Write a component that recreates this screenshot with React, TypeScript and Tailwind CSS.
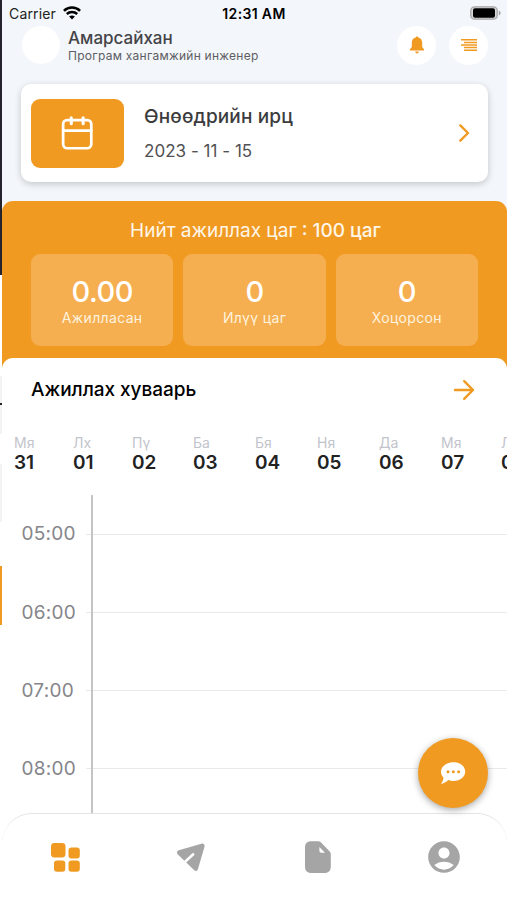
import { MdAccountCircle } from 'react-icons/md';

const stats = [
  { value: '0.00', label: 'Ажилласан' },
  { value: '0', label: 'Илүү цаг' },
  { value: '0', label: 'Хоцорсон' },
];

const days = [
  { name: 'Мя', date: '31', width: 'w-[59px]' },
  { name: 'Лх', date: '01', width: 'w-[59px]' },
  { name: 'Пү', date: '02', width: 'w-[61px]' },
  { name: 'Ба', date: '03', width: 'w-[62px]' },
  { name: 'Бя', date: '04', width: 'w-[62px]' },
  { name: 'Ня', date: '05', width: 'w-[62px]' },
  { name: 'Да', date: '06', width: 'w-[62px]' },
  { name: 'Мя', date: '07', width: 'w-[60px]' },
  { name: 'Лх', date: '08', width: 'w-[60px]' },
];

const hours = ['05:00', '06:00', '07:00', '08:00'];

function StatusBar() {
  return (
    <div className="flex h-[26px] shrink-0 items-center pl-[7px] pr-[6px] text-black">
      <div className="flex flex-1 items-center gap-[7px]">
        <span className="text-[14px] tracking-[0.15px] text-[#222]">Carrier</span>
        <svg width="18" height="14" viewBox="0 0 18 14" fill="none" stroke="#000" strokeWidth="2.5">
          <path d="M0.9 4.9C5.4 0.4 12.6 0.4 17.1 4.9" />
          <path d="M3.8 8C6.7 5.2 11.3 5.2 14.2 8" />
          <path d="M9 13.6L6.1 10.6C7.7 9.2 10.3 9.2 11.9 10.6Z" fill="#000" stroke="none" />
        </svg>
      </div>
      <span className="pt-[1px] pr-[2px] text-[14px] font-semibold tracking-[0.35px]">12:31 AM</span>
      <div className="flex flex-1 justify-end">
        <svg width="31" height="14" viewBox="0 0 31 14">
          <rect x="0.8" y="0.8" width="26.4" height="12.4" rx="3.8" fill="#d8d8da" stroke="#a5a5a8" strokeWidth="1.3" />
          <rect x="3" y="2.3" width="22" height="9.4" rx="2" fill="#000" />
          <path d="M28.8 4.5C31.2 5.4 31.2 8.6 28.8 9.5Z" fill="#a5a5a8" />
        </svg>
      </div>
    </div>
  );
}

function Header() {
  return (
    <header className="flex h-[38px] shrink-0 items-center pl-[20px] pr-[19px]">
      <div className="h-[38px] w-[38px] rounded-full bg-white" />
      <div className="ml-[8px] flex-1 pt-[1px] whitespace-nowrap">
        <div className="text-[17px] leading-[20px] font-medium text-[#444448]">Амарсайхан</div>
        <div className="text-[12px] leading-[16px] tracking-[0.26px] text-[#5d5d63]">Програм хангамжийн инженер</div>
      </div>
      <div className="flex gap-[13px]">
        <div className="flex h-[39px] w-[39px] items-center justify-center rounded-full bg-white">
          <svg width="16" height="18" viewBox="0 0 16 18" fill="#f09a22">
            <path d="M8 0.4C7.2 0.4 6.7 0.9 6.7 1.6C4.1 2.2 2.8 4.2 2.8 6.8V10.8C2.8 12 0.9 12.8 0.9 13.7V14.6H15.1V13.7C15.1 12.8 13.2 12 13.2 10.8V6.8C13.2 4.2 11.9 2.2 9.3 1.6C9.3 0.9 8.8 0.4 8 0.4Z" />
            <path d="M6.2 15.4H9.8C9.6 16.7 9 17.4 8 17.4S6.4 16.7 6.2 15.4Z" />
          </svg>
        </div>
        <div className="flex h-[39px] w-[39px] items-center justify-center rounded-full bg-white">
          <svg width="18" height="14" viewBox="0 0 18 14" stroke="#f09a22" strokeWidth="1.5">
            <path d="M1 1.8H17M4 4.4H17M1 7H17M4 9.6H17M4 12.2H17" />
          </svg>
        </div>
      </div>
    </header>
  );
}

function AttendanceCard() {
  return (
    <div className="mx-[19px] mt-[20px] flex h-[98px] shrink-0 items-center rounded-[10px] bg-white pr-[17px] pl-[10px] shadow-[0_2px_7px_rgba(0,0,0,0.2)]">
      <div className="flex h-[69px] w-[93px] items-center justify-center rounded-[9px] bg-[#f09a22]">
        <svg width="33" height="35" viewBox="0 0 34 36" fill="none" stroke="#fff" strokeWidth="2.8" strokeLinecap="round">
          <rect x="2.2" y="4.2" width="29" height="29" rx="4" />
          <path d="M2.2 15H31.2" />
          <path d="M10.6 1.8V8M22.8 1.8V8" strokeWidth="3.2" />
        </svg>
      </div>
      <div className="ml-[20px] flex-1 pt-[2px]">
        <div className="text-[19px] leading-[24px] font-medium tracking-[0.15px] text-[#3c3c3e]">Өнөөдрийн ирц</div>
        <div className="mt-[10px] text-[17px] leading-[24px] tracking-[0.03px] text-[#515154]">2023 - 11 - 15</div>
      </div>
      <svg width="14" height="20" viewBox="0 0 14 20" fill="none" stroke="#f09a22" strokeWidth="2.4" strokeLinecap="round" strokeLinejoin="round">
        <path d="M3.3 2.4L11 10L3.3 17.6" />
      </svg>
    </div>
  );
}

function Summary() {
  return (
    <section className="mt-[19px] flex h-[175px] shrink-0 flex-col rounded-t-[11px] bg-[#f09a22] pr-[29px] pl-[29px] text-white">
      <div className="mt-[18px] pl-[2px] text-center text-[19px] leading-[23px] whitespace-pre text-[#fff6e8]">
        Нийт ажиллах цаг<span className="font-medium"> : 100 цаг</span>
      </div>
      <div className="mt-[12px] grid grid-cols-3 gap-[10px]">
        {stats.map((stat) => (
          <div key={stat.label} className="flex h-[92px] flex-col items-center rounded-[9px] bg-[#f5ae50] pt-[21px]">
            <span className="text-[29px] leading-[34px] font-medium tracking-[-0.5px]">{stat.value}</span>
            <span className="text-[14px] leading-[18px] tracking-[0.35px] text-[#fff3df]">{stat.label}</span>
          </div>
        ))}
      </div>
    </section>
  );
}

function Schedule() {
  return (
    <section className="-mt-[18px] flex h-[455px] shrink-0 flex-col overflow-hidden rounded-t-[11px] bg-white">
      <div className="flex h-[64px] shrink-0 items-center justify-between pr-[32px] pl-[29px]">
        <h2 className="text-[19px] font-medium tracking-[-0.03px] text-black">Ажиллах хуваарь</h2>
        <svg width="22" height="22" viewBox="0 0 22 22" fill="none" stroke="#f09a22" strokeWidth="2.4" strokeLinecap="round" strokeLinejoin="round">
          <path d="M2 11H20M11.2 2.2L20 11L11.2 19.8" />
        </svg>
      </div>
      <div className="mt-[12px] flex h-[61px] shrink-0 pl-[12px]">
        {days.map((day, i) => (
          <div key={i} className={`${day.width} shrink-0`}>
            <div className="text-[14px] leading-[18px] text-[#c2c4cb]">{day.name}</div>
            <div className="text-[19px] leading-[22px] font-semibold text-[#222]">{day.date}</div>
          </div>
        ))}
      </div>
      <div className="grid flex-1 grid-cols-[89px_1.5px_1fr]">
        <div className="flex flex-col">
          {hours.map((hour) => (
            <div key={hour} className="flex h-[78.2px] shrink-0 items-center">
              <span className="flex-1 pt-[1px] pl-[19.5px] text-[19px] tracking-[0.25px] text-[#85858a]">{hour}</span>
              <span className="h-px w-[5px] bg-[#e9e9e9]" />
            </div>
          ))}
        </div>
        <div className="bg-[#c4c4c4]" />
        <div className="flex flex-col">
          {hours.map((hour) => (
            <div key={hour} className="flex h-[78.2px] shrink-0 items-center">
              <span className="h-px w-full bg-[#e9e9e9]" />
            </div>
          ))}
        </div>
      </div>
    </section>
  );
}

function BottomNav() {
  return (
    <nav className="flex h-[87px] shrink-0 justify-between rounded-t-[30px] border-t border-[#e4e4e4] bg-white px-[47px] pt-[27px] text-[#a5a5a5]">
      <svg width="32" height="32" viewBox="0 0 32 32" fill="#f09a22">
        <rect x="2" y="2" width="14.5" height="14.5" rx="3.4" />
        <rect x="19.5" y="6.5" width="11.3" height="11" rx="3" />
        <rect x="5" y="19.5" width="11.3" height="11.3" rx="3" />
        <rect x="19.5" y="19.5" width="11.3" height="11.3" rx="3" />
      </svg>
      <svg width="32" height="32" viewBox="0 0 32 32">
        <path
          d="M26.4 2.7L3.8 9.2C1.7 9.9 1.4 12 2.9 13.4L19.3 29.2C20.7 30.5 22.4 29.8 22.9 28.2L29.5 5.8C30 3.7 28.4 2.1 26.4 2.7Z"
          fill="currentColor"
        />
        <path d="M8.5 22.2L18.2 13.3" stroke="#fff" strokeWidth="2.6" strokeLinecap="round" />
      </svg>
      <svg width="32" height="32" viewBox="0 0 32 32">
        <path d="M9.4 0.2H16.2C17.4 0.2 18.3 0.6 19.1 1.4L27.5 10.2C28.3 11 28.8 12 28.8 13.1V25.5C28.8 29.8 26.6 32 22.5 32H9.4C5.2 32 3 29.8 3 25.5V6.5C3 2.3 5.2 0.2 9.4 0.2Z" fill="currentColor" />
        <path d="M17.4 6V9.5C17.4 11 18.1 11.7 19.5 11.7H23Z" fill="#fff" />
      </svg>
      <MdAccountCircle className="-m-[3px] h-[38px] w-[38px]" />
    </nav>
  );
}

export default function App() {
  return (
    <div className="relative flex h-[900px] w-[507px] overflow-hidden bg-white font-['Inter','Liberation_Sans',sans-serif]">
      {/* edge of the previous screen */}
      <div className="flex w-[2px] shrink-0 flex-col">
        <div className="h-[275px] bg-[#25232e]" />
        <div className="mt-[101px] h-[27px] bg-[#f3f3f3]" />
        <div className="h-[1.5px] bg-[#222]" />
        <div className="h-[29px] bg-[#f3f3f3]" />
        <div className="mt-[30px] h-[58px] bg-[#f3f3f3]" />
        <div className="mt-[44px] h-[59px] bg-[#f09a22]" />
      </div>
      <main className="flex min-w-0 flex-1 flex-col">
        <div className="flex h-[212px] shrink-0 flex-col bg-[#f3f6fa]">
          <StatusBar />
          <Header />
          <AttendanceCard />
        </div>
        <div className="-mt-[30px] flex flex-col">
          <Summary />
          <Schedule />
          <BottomNav />
        </div>
      </main>
      <button className="absolute top-[738px] left-[418px] flex h-[70px] w-[70px] items-center justify-center rounded-full bg-[#f09a22] shadow-[0_2px_7px_rgba(0,0,0,0.35)]">
        <svg width="26" height="24" viewBox="0 0 26 24">
          <path d="M13.6 1.2C20.3 1.2 25.2 5.2 25.2 10.6S20.3 20 13.6 20C11.6 20 9.9 19.7 8.3 19C6.2 21 3.6 22.7 1 22.8C2.3 21 3.3 19 3.5 16.5C1.8 14.9 1 12.9 1 10.6C1 5.2 6.9 1.2 13.6 1.2Z" fill="#fff" />
          <circle cx="8" cy="10.7" r="1.5" fill="#f09a22" />
          <circle cx="13.3" cy="10.7" r="1.5" fill="#f09a22" />
          <circle cx="18.6" cy="10.7" r="1.5" fill="#f09a22" />
        </svg>
      </button>
    </div>
  );
}
